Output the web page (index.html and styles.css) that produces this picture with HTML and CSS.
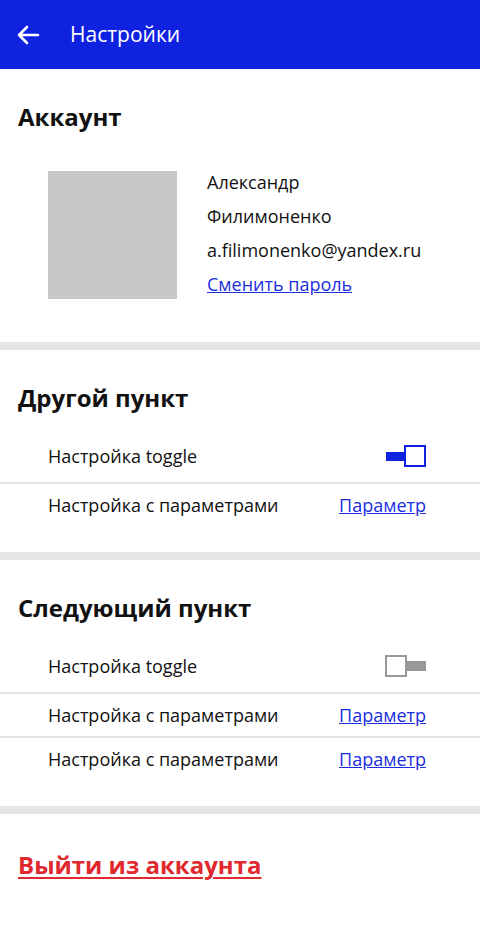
FILE: index.html
```
<!DOCTYPE html>
<html lang="ru">
<head>
<meta charset="utf-8">
<title>Настройки</title>
<link rel="stylesheet" href="styles.css">
</head>
<body>
<header class="topbar">
  <button class="back" aria-label="Назад">
    <svg width="24" height="24" viewBox="0 0 24 24"><path d="M22 12H3M11 4L3 12L11 20" fill="none" stroke="#fff" stroke-width="2.6" stroke-linecap="round" stroke-linejoin="round"/></svg>
  </button>
  <h1 class="topbar-title">Настройки</h1>
</header>

<section class="section">
  <h2 class="section-title">Аккаунт</h2>
  <div class="account">
    <div class="avatar"></div>
    <div class="account-info">
      <div class="info-line">Александр</div>
      <div class="info-line">Филимоненко</div>
      <div class="info-line">a.filimonenko@yandex.ru</div>
      <a class="info-line link" href="#">Сменить пароль</a>
    </div>
  </div>
</section>

<section class="section">
  <h2 class="section-title">Другой пункт</h2>
  <div class="rows">
    <div class="row row-toggle">
      <span class="row-label">Настройка toggle</span>
      <span class="toggle on"><span class="toggle-bar"></span><span class="toggle-knob"></span></span>
    </div>
    <div class="row">
      <span class="row-label">Настройка с параметрами</span>
      <a class="link" href="#">Параметр</a>
    </div>
  </div>
</section>

<section class="section">
  <h2 class="section-title">Следующий пункт</h2>
  <div class="rows">
    <div class="row row-toggle">
      <span class="row-label">Настройка toggle</span>
      <span class="toggle off"><span class="toggle-knob"></span><span class="toggle-bar"></span></span>
    </div>
    <div class="row">
      <span class="row-label">Настройка с параметрами</span>
      <a class="link" href="#">Параметр</a>
    </div>
    <div class="row">
      <span class="row-label">Настройка с параметрами</span>
      <a class="link" href="#">Параметр</a>
    </div>
  </div>
</section>

<section class="logout-section">
  <a class="logout" href="#">Выйти из аккаунта</a>
</section>
</body>
</html>
```
FILE: styles.css
```
* { box-sizing: border-box; }
html, body {
  margin: 0;
  padding: 0;
  background: #fff;
  font-family: "Open Sans", "Noto Sans", sans-serif;
  color: #111;
}
.topbar {
  height: 69px;
  background: #0f22e0;
  display: flex;
  align-items: center;
  padding-left: 16px;
}
.back {
  border: 0;
  background: none;
  padding: 0;
  width: 24px;
  height: 24px;
  display: flex;
}
.topbar-title {
  margin: -2px 0 0 30px;
  font-size: 21px;
  font-weight: 400;
  color: #fff;
}
.section {
  padding: 32px 0 26px;
  border-bottom: 8px solid #e5e5e5;
}
.section-title {
  margin: 0;
  padding-left: 18px;
  font-size: 24px;
  line-height: 32px;
  font-weight: 700;
}
.account {
  display: flex;
  align-items: center;
  padding: 34px 0 13px 48px;
  gap: 30px;
}
.avatar {
  width: 129px;
  height: 128px;
  background: #c8c8c8;
}
.account-info {
  display: flex;
  flex-direction: column;
  font-size: 18px;
  padding-bottom: 2px;
  margin-top: -2px;
}
.info-line {
  line-height: 34px;
}
.link {
  color: #1a2ee0;
  text-decoration: underline;
  font-size: 18px;
}
.rows {
  margin-top: 16px;
}
.row {
  height: 44px;
  display: flex;
  align-items: center;
  justify-content: space-between;
  padding: 0 54px 0 48px;
  font-size: 18px;
  border-top: 2px solid #e2e2e2;
}
.row:first-child {
  border-top: 0;
}
.row-toggle {
  height: 52px;
}
.toggle {
  display: flex;
  align-items: center;
}
.toggle-knob {
  width: 22px;
  height: 22px;
  border: 2px solid currentColor;
  background: #fff;
}
.toggle-bar {
  width: 18px;
  height: 9px;
  background: currentColor;
}
.toggle.on { color: #0f22e0; }
.toggle.off { color: #999; }
.toggle.off .toggle-bar { width: 19px; height: 10px; }
.logout-section {
  padding: 34px 18px 30px;
}
.logout {
  color: #e0282e;
  font-size: 24px;
  line-height: 33px;
  font-weight: 700;
  text-decoration: underline;
  text-decoration-thickness: 2px;
  text-underline-offset: 3px;
}
```
